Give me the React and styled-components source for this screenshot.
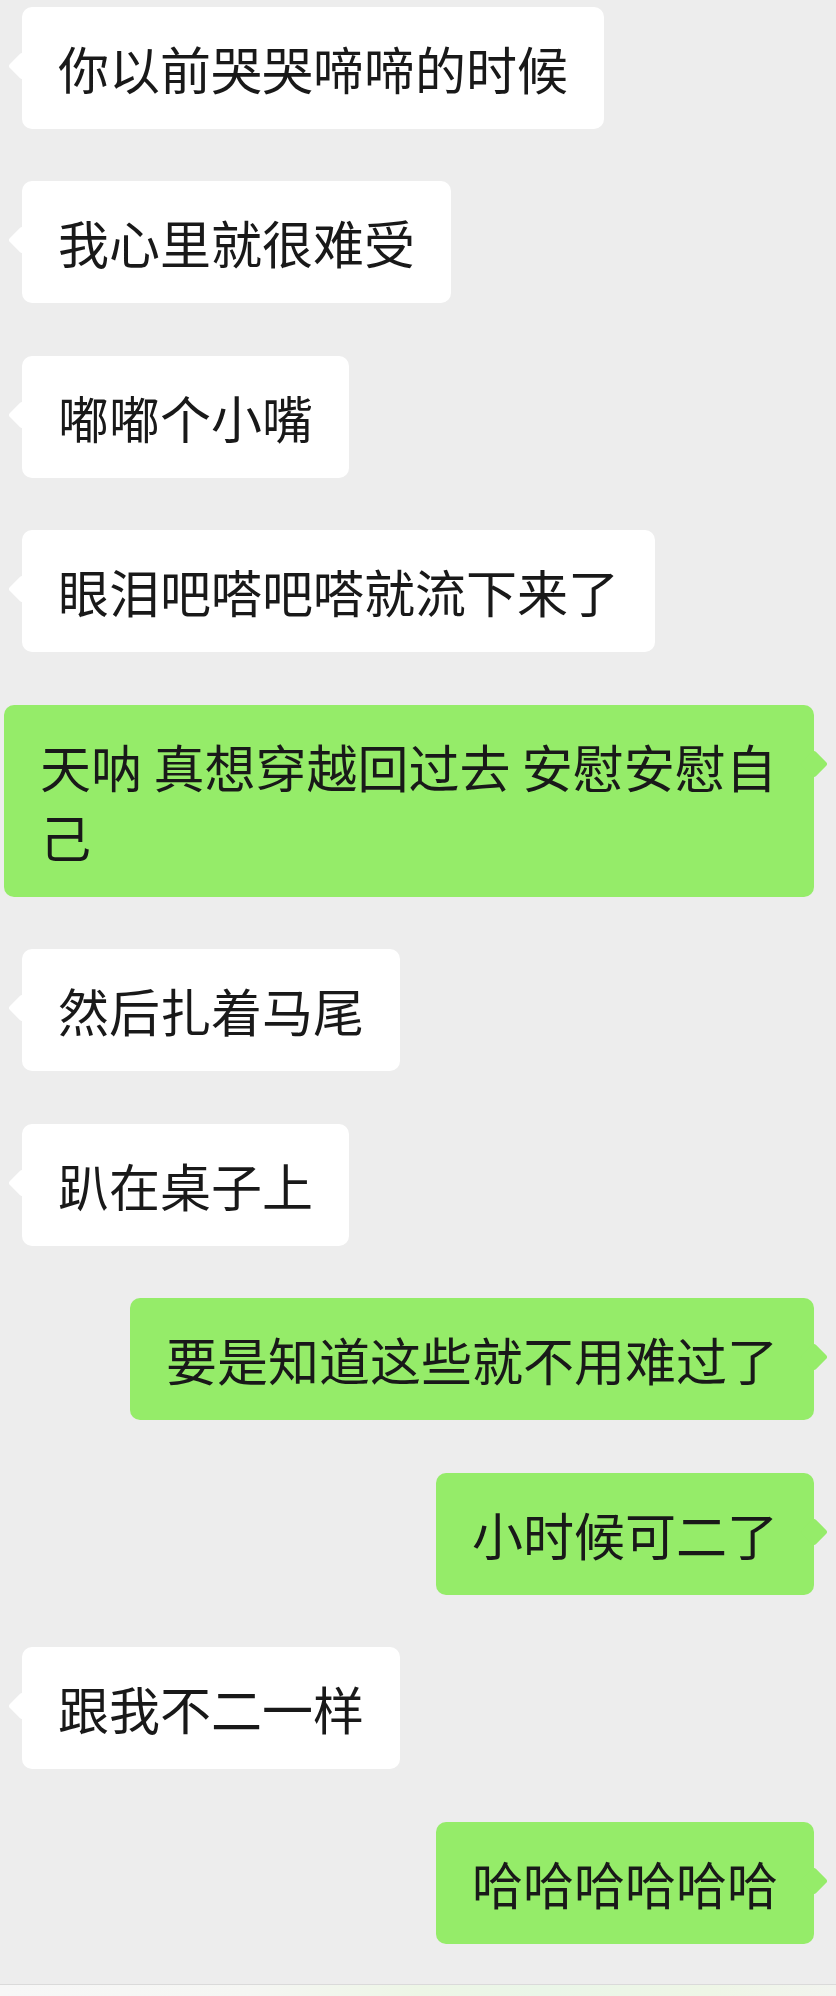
import React from "react";
import styled, { createGlobalStyle, css } from "styled-components";

const GlobalStyle = createGlobalStyle`
  html, body {
    margin: 0;
    padding: 0;
    background: #ededed;
  }
  body {
    font-family: "Noto Sans CJK SC", "Noto Sans", sans-serif;
  }
`;

const Page = styled.div`
  display: flex;
  flex-direction: column;
  min-height: 100vh;
  background: #ededed;
`;

const MessageList = styled.div`
  flex: 1;
  display: flex;
  flex-direction: column;
  gap: 52.5px;
  padding: 6.5px 22px 0;
`;

const Row = styled.div`
  display: flex;
  justify-content: ${(p) => (p.$mine ? "flex-end" : "flex-start")};
  margin-left: ${(p) => (p.$mine ? "-18px" : "0")};
`;

const Bubble = styled.div`
  position: relative;
  max-width: 810px;
  box-sizing: border-box;
  padding: 26px 36px;
  border-radius: 10px;
  font-size: 51px;
  line-height: 70px;
  color: #191919;
  background: ${(p) => (p.$mine ? "#95ec69" : "#ffffff")};

  &::before {
    content: "";
    position: absolute;
    top: 49px;
    width: 20px;
    height: 20px;
    border-radius: 3px;
    background: inherit;
    transform: rotate(45deg);
    ${(p) =>
      p.$mine
        ? css`
            right: -10px;
          `
        : css`
            left: -10px;
          `}
  }
`;

const Footer = styled.div`
  height: 11px;
  border-top: 1px solid #dadada;
  background: linear-gradient(
    90deg,
    #f7f7f7 0%,
    #f5f6f3 30%,
    #edf6e6 50%,
    #eaf6e8 65%,
    #eef6e6 85%,
    #f2f4ef 100%
  );
`;

const messages = [
  { text: "你以前哭哭啼啼的时候" },
  { text: "我心里就很难受" },
  { text: "嘟嘟个小嘴" },
  { text: "眼泪吧嗒吧嗒就流下来了" },
  { text: "天呐 真想穿越回过去 安慰安慰自己", mine: true },
  { text: "然后扎着马尾" },
  { text: "趴在桌子上" },
  { text: "要是知道这些就不用难过了", mine: true },
  { text: "小时候可二了", mine: true },
  { text: "跟我不二一样" },
  { text: "哈哈哈哈哈哈", mine: true },
];

const App = () => {
  return (
    <Page>
      <GlobalStyle />
      <MessageList>
        {messages.map((m, i) => (
          <Row key={i} $mine={m.mine}>
            <Bubble $mine={m.mine}>{m.text}</Bubble>
          </Row>
        ))}
      </MessageList>
      <Footer />
    </Page>
  );
};

export default App;
